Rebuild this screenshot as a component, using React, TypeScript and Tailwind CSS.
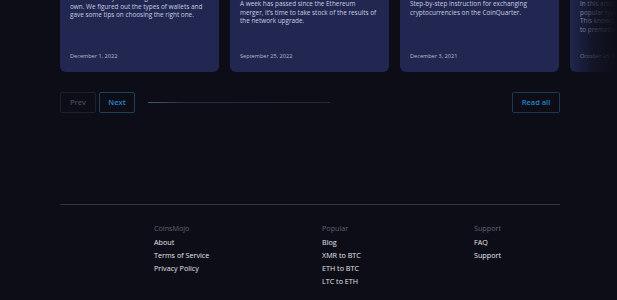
const cards = [
    {
        pt: 'pt-[42px]',
        lines: [
            'about safe ways of storing their coins on their',
            'own. We figured out the types of wallets and',
            'gave some tips on choosing the right one.',
        ],
        date: 'December 1, 2022',
    },
    {
        pt: 'pt-[48px]',
        lines: [
            'A week has passed since the Ethereum',
            'merger, it\u2019s time to take stock of the results of',
            'the network upgrade.',
        ],
        date: 'September 25, 2022',
    },
    {
        pt: 'pt-[48px]',
        lines: [
            'Step-by-step instruction for exchanging',
            'cryptocurrencies on the CoinQuarter.',
        ],
        date: 'December 3, 2021',
    },
    {
        pt: 'pt-[48px]',
        lines: [
            'In this article we will review the most',
            'popular types of crypto wallets.',
            'This knowledge will help you avoid',
            'to premature losses of your funds.',
        ],
        date: 'October 26, 2021',
    },
];

const footerCols = [
    { title: 'CoinsMojo', links: ['About', 'Terms of Service', 'Privacy Policy'], w: 'w-[168px]' },
    { title: 'Popular', links: ['Blog', 'XMR to BTC', 'ETH to BTC', 'LTC to ETH'], w: 'w-[152px]' },
    { title: 'Support', links: ['FAQ', 'Support'], w: 'w-[80px]' },
];

const font = "font-['Open_Sans',sans-serif]";

export default function App() {
    return (
        <div className={`w-[617px] h-[300px] overflow-hidden bg-[#0c0d16] ${font}`}>
            {/* articles carousel, scrolled so the card tops are off screen */}
            <div className="relative -mt-[48px] overflow-hidden">
                <div className="flex gap-[11px] pl-[60px]">
                    {cards.map((card) => (
                        <div
                            key={card.date}
                            className={`shrink-0 w-[159px] h-[120px] rounded-[6px] bg-[#212750] px-[10px] flex flex-col overflow-hidden ${card.pt}`}
                        >
                            <div className="text-[6.4px] leading-[8.5px] text-[#c9cce0] whitespace-nowrap">
                                {card.lines.map((l) => (
                                    <p key={l}>{l}</p>
                                ))}
                            </div>
                            <p className="mt-auto mb-[12px] text-[5.6px] leading-[8px] text-[#b7bad0]">{card.date}</p>
                        </div>
                    ))}
                </div>
                <div className="absolute right-0 top-0 h-full w-[48px] bg-gradient-to-r from-transparent via-[#0c0d16]/70 to-[#0c0d16]" />
            </div>

            {/* pager */}
            <div className="mt-[20px] ml-[60px] w-[500px] flex items-center">
                <button className="w-[36px] h-[21px] rounded-[2px] border border-[#1f2029] text-[7.5px] font-semibold text-[#464854]">
                    Prev
                </button>
                <button className="ml-[3px] w-[36px] h-[21px] rounded-[2px] border border-[#1c4258] text-[7.5px] font-semibold text-[#2388cc]">
                    Next
                </button>
                <div className="ml-[13px] w-[182px] h-[1.5px] rounded-full bg-gradient-to-r from-[#41606f] via-[#2a2d3a] via-20% to-[#262834]" />
                <button className="ml-auto w-[48px] h-[21px] rounded-[2px] border border-[#1b3a52] text-[7.5px] font-semibold text-[#2284c8]">
                    Read all
                </button>
            </div>

            {/* footer */}
            <div className="mt-[91px] ml-[60px] w-[500px] border-t border-[#33343f]">
                <div className="flex pl-[94px] pt-[17px]">
                    {footerCols.map((col) => (
                        <div key={col.title} className={`${col.w} shrink-0 flex flex-col`}>
                            <p className="text-[7.2px] leading-[13px] text-[#62636f]">{col.title}</p>
                            <div className="mt-[1px] flex flex-col">
                                {col.links.map((l) => (
                                    <a key={l} className="text-[7.2px] leading-[13px] text-[#e4e4e8]">
                                        {l}
                                    </a>
                                ))}
                            </div>
                        </div>
                    ))}
                </div>
            </div>
        </div>
    );
}
